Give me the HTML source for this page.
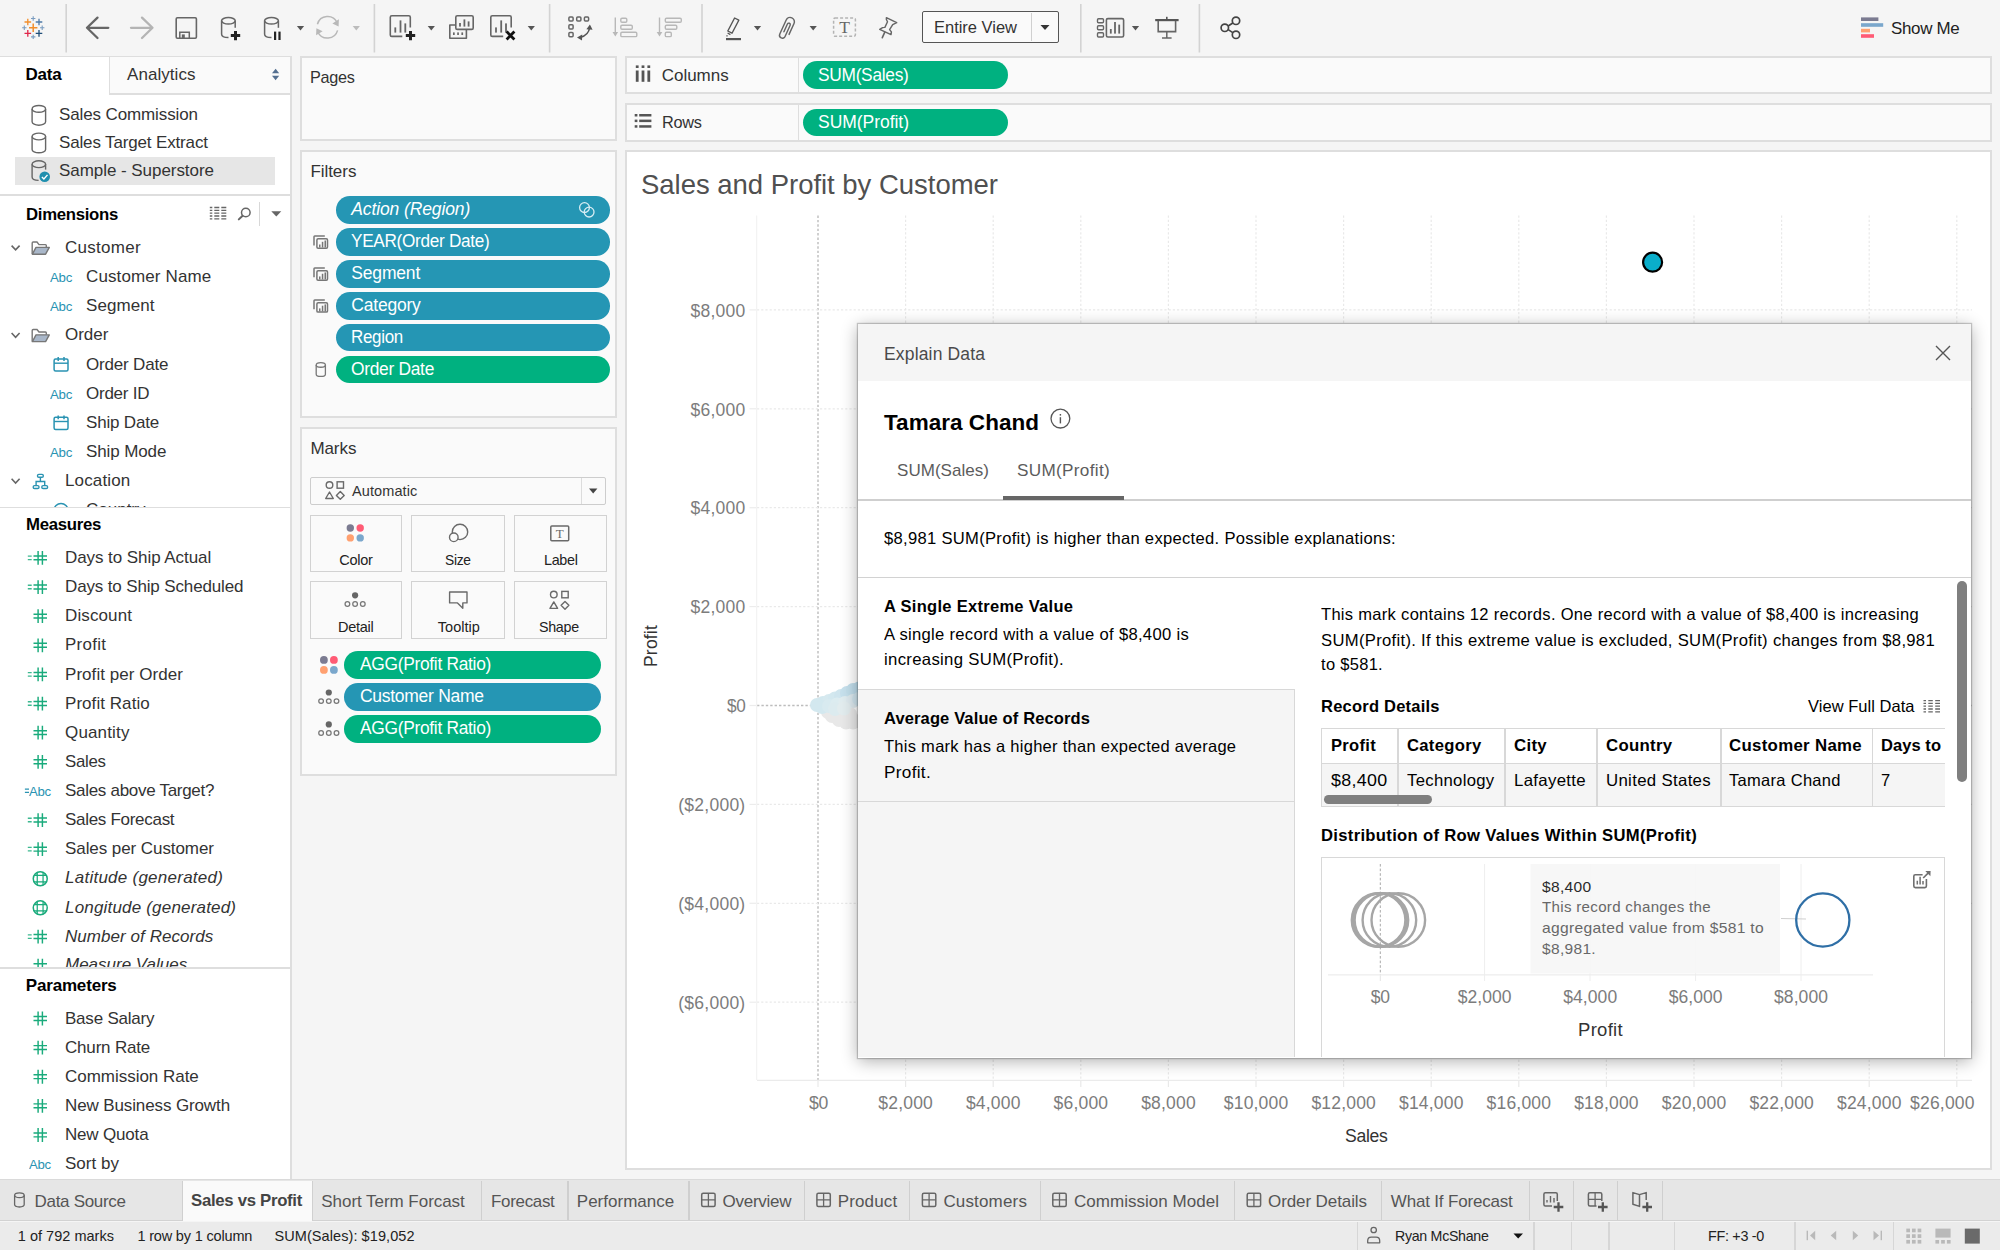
<!DOCTYPE html>
<html lang="en"><head><meta charset="utf-8"><title>Tableau - Sales vs Profit</title>
<style>
html,body{margin:0;padding:0;}
body{width:2000px;height:1250px;overflow:hidden;background:#f5f5f5;font-family:"Liberation Sans", sans-serif;position:relative;}
#app{position:absolute;left:0;top:0;width:2000px;height:1250px;overflow:hidden;}
#app div,#app span.t,#app svg{position:absolute;}
#app div{box-sizing:border-box;}
span.t{white-space:pre;}
svg{overflow:visible;}
</style></head><body><div id="app">
<div style="left:0px;top:0px;width:2000px;height:56px;background:#f5f5f5;"></div>
<div style="left:922px;top:11px;width:137px;height:32px;background:#fafafa;border:1.5px solid #555;border-radius:2px;"></div>
<div style="left:1031px;top:13px;width:1px;height:28px;background:#d0d0d0;"></div>
<span class="t" style="top:19px;font-size:16.5px;line-height:16.5px;color:#333;left:934px;letter-spacing:-0.016px;">Entire View</span>
<span class="t" style="top:20px;font-size:17px;line-height:17px;color:#222;left:1890.8px;letter-spacing:-0.3px;transform:scaleX(0.9960);transform-origin:0 50%;">Show Me</span>
<svg style="left:0px;top:0px;" width="2000" height="56" viewBox="0 0 2000 56"><rect x="65.4" y="4" width="1.6" height="48.5" fill="#d3d3d3"/><rect x="373.6" y="4" width="1.6" height="48.5" fill="#d3d3d3"/><rect x="548.8" y="4" width="1.6" height="48.5" fill="#d3d3d3"/><rect x="701.2" y="4" width="1.6" height="48.5" fill="#d3d3d3"/><rect x="1080.0" y="4" width="1.6" height="48.5" fill="#d3d3d3"/><rect x="1198.6" y="4" width="1.6" height="48.5" fill="#d3d3d3"/><path d="M29.000000000000004 27.8H37.400000000000006M33.2 23.6V32.0" stroke="#f28e2b" stroke-width="1.5" fill="none"/><path d="M24.5 22H31.1M27.8 18.7V25.3" stroke="#f28e2b" stroke-width="1.3" fill="none"/><path d="M35.7 22H42.3M39 18.7V25.3" stroke="#4e79a7" stroke-width="1.3" fill="none"/><path d="M24.5 33.4H31.1M27.8 30.099999999999998V36.699999999999996" stroke="#e0264a" stroke-width="1.3" fill="none"/><path d="M35.7 33.4H42.3M39 30.099999999999998V36.699999999999996" stroke="#1f4e79" stroke-width="1.3" fill="none"/><path d="M31.000000000000004 18.5H35.400000000000006M33.2 16.3V20.7" stroke="#7a9cc0" stroke-width="1.1" fill="none"/><path d="M31.000000000000004 36.9H35.400000000000006M33.2 34.699999999999996V39.1" stroke="#7a9cc0" stroke-width="1.1" fill="none"/><path d="M22.1 27.8H26.5M24.3 25.6V30.0" stroke="#7a9cc0" stroke-width="1.1" fill="none"/><path d="M40.0 27.8H44.400000000000006M42.2 25.6V30.0" stroke="#7a9cc0" stroke-width="1.1" fill="none"/><path d="M97.5 17.6L87 27.8L97.5 38M87 27.8H108.3" stroke="#666" stroke-width="2.3" fill="none" stroke-linecap="round" stroke-linejoin="round"/><path d="M142 17.6L152.5 27.8L142 38M152.5 27.8H131" stroke="#b4b4b4" stroke-width="2.3" fill="none" stroke-linecap="round" stroke-linejoin="round"/><rect x="176.2" y="17.8" width="20.2" height="20.4" rx="1.2" stroke="#666" stroke-width="1.6" fill="none"/><path d="M179.8 38V32.2H189.3V38" stroke="#666" stroke-width="1.5" fill="none"/><rect x="181.8" y="34.4" width="3" height="3.8" fill="#666"/><ellipse cx="228.39999999999998" cy="20.8" rx="6.799999999999997" ry="3.3" stroke="#666" stroke-width="1.5" fill="none"/><path d="M235.2 20.8V27.8" stroke="#666" stroke-width="1.5" fill="none"/><path d="M221.6 20.8V34.300000000000004Q221.6 37.6 228.5 37.6" stroke="#666" stroke-width="1.5" fill="none"/><path d="M230.8 35.6H240.2M235.5 30.9V40.3" stroke="#222" stroke-width="3" fill="none"/><ellipse cx="271.5" cy="20.8" rx="6.899999999999977" ry="3.3" stroke="#666" stroke-width="1.5" fill="none"/><path d="M278.4 20.8V27.8" stroke="#666" stroke-width="1.5" fill="none"/><path d="M264.6 20.8V34.300000000000004Q264.6 37.6 271.5 37.6" stroke="#666" stroke-width="1.5" fill="none"/><rect x="274" y="31.6" width="2.2" height="8.4" fill="#222"/><rect x="278.4" y="31.6" width="2.2" height="8.4" fill="#222"/><path d="M296.9 26.1H304.1L300.5 30.5Z" fill="#555"/><path d="M317.4 24.2A10.6 10.6 0 0 1 337.2 22.6" stroke="#b8b8b8" stroke-width="1.5" fill="none"/><path d="M337.6 30.4A10.6 10.6 0 0 1 317.8 32" stroke="#b8b8b8" stroke-width="1.5" fill="none"/><path d="M338.9 19.3L338.6 26.4L332.4 23.4Z" fill="#b8b8b8"/><path d="M316.1 35.3L316.4 28.2L322.6 31.2Z" fill="#b8b8b8"/><path d="M352.7 26.1H359.90000000000003L356.3 30.5Z" fill="#bcbcbc"/><path d="M410.3 27.400000000000006V17.3Q410.3 15.8 408.8 15.8H391.8Q390.3 15.8 390.3 17.3V34.900000000000006Q390.3 36.400000000000006 391.8 36.400000000000006H402.3" stroke="#666" stroke-width="1.6" fill="none"/><rect x="394.40000000000003" y="27.4" width="1.8" height="5.200000000000003" fill="#666"/><rect x="399.6" y="20.4" width="1.8" height="12.200000000000003" fill="#666"/><rect x="404.40000000000003" y="23.4" width="1.8" height="9.200000000000003" fill="#666"/><path d="M405.8 35.6H415.2M410.5 30.9V40.3" stroke="#222" stroke-width="3" fill="none"/><path d="M427.7 26.1H434.90000000000003L431.3 30.5Z" fill="#555"/><path d="M455.6 25H449.8V38.2H466.4V30" stroke="#666" stroke-width="1.6" fill="none" stroke-linejoin="round"/><rect x="455.8" y="15.8" width="17.4" height="13.6" rx="1.5" stroke="#666" stroke-width="1.6" fill="none"/><rect x="459.1" y="23" width="1.8" height="3.6000000000000014" fill="#666"/><rect x="463.5" y="19.4" width="1.8" height="7.200000000000003" fill="#666"/><rect x="467.70000000000005" y="21.4" width="1.8" height="5.200000000000003" fill="#666"/><rect x="453" y="32.4" width="1.7" height="2.6" fill="#666"/><rect x="457.2" y="32.4" width="1.7" height="2.6" fill="#666"/><rect x="461.4" y="32.4" width="1.7" height="2.6" fill="#666"/><path d="M511.2 27.400000000000006V17.3Q511.2 15.8 509.7 15.8H492.3Q490.8 15.8 490.8 17.3V34.900000000000006Q490.8 36.400000000000006 492.3 36.400000000000006H503.2" stroke="#666" stroke-width="1.6" fill="none"/><rect x="495.1" y="27.4" width="1.8" height="5.200000000000003" fill="#666"/><rect x="500.3" y="20.4" width="1.8" height="12.200000000000003" fill="#666"/><rect x="505.1" y="23.4" width="1.8" height="9.200000000000003" fill="#666"/><path d="M506.6 31.6L514.4 39.4M514.4 31.6L506.6 39.4" stroke="#111" stroke-width="2.8" fill="none"/><path d="M527.6999999999999 26.1H534.9L531.3 30.5Z" fill="#555"/><rect x="568.9" y="16.9" width="4.2" height="4.2" rx="1" stroke="#666" stroke-width="1.5" fill="none"/><rect x="576.6999999999999" y="16.9" width="4.2" height="4.2" rx="1" stroke="#666" stroke-width="1.5" fill="none"/><rect x="584.4" y="16.9" width="4.2" height="4.2" rx="1" stroke="#666" stroke-width="1.5" fill="none"/><rect x="568.9" y="24.7" width="4.2" height="4.2" rx="1" stroke="#666" stroke-width="1.5" fill="none"/><rect x="568.9" y="32.6" width="4.2" height="4.2" rx="1" stroke="#666" stroke-width="1.5" fill="none"/><path d="M580.5 37.2Q588.5 35.5 589.8 27" stroke="#555" stroke-width="1.6" fill="none"/><path d="M589.9 24.4L592.6 29.8L586.4 29.2Z" fill="#555"/><path d="M577 37.4L582.2 34.4L582 40.4Z" fill="#555"/><path d="M615.3 17.5V33" stroke="#b8b8b8" stroke-width="1.4" fill="none"/><path d="M612.5 32L618.0999999999999 32L615.3 36.5Z" fill="#b8b8b8"/><rect x="620.8" y="18.2" width="6" height="4" rx="1.2" stroke="#b8b8b8" stroke-width="1.4" fill="none"/><rect x="620.8" y="25.2" width="11.5" height="4" rx="1.2" stroke="#b8b8b8" stroke-width="1.4" fill="none"/><rect x="620.8" y="32.2" width="16" height="4.4" rx="1.2" stroke="#b8b8b8" stroke-width="1.4" fill="none"/><path d="M659.5 17.5V33" stroke="#b8b8b8" stroke-width="1.4" fill="none"/><path d="M656.7 32L662.3 32L659.5 36.5Z" fill="#b8b8b8"/><rect x="665.3" y="18.2" width="16" height="4" rx="1.2" stroke="#b8b8b8" stroke-width="1.4" fill="none"/><rect x="665.3" y="25.2" width="11.5" height="4" rx="1.2" stroke="#b8b8b8" stroke-width="1.4" fill="none"/><rect x="665.3" y="32.2" width="6" height="4.4" rx="1.2" stroke="#b8b8b8" stroke-width="1.4" fill="none"/><path d="M734.6 18L738.8 20.2L732 33.2L727.8 31Z" stroke="#555" stroke-width="1.4" fill="none" stroke-linejoin="round"/><path d="M727.6 33L730.4 34.6M726.6 35.4L727.4 36.4" stroke="#555" stroke-width="1.3" fill="none"/><rect x="726" y="38" width="15" height="2.2" fill="#555"/><path d="M753.9 26.1H761.1L757.5 30.5Z" fill="#555"/><g transform="translate(790.2 21.76) rotate(24.4)"><path d="M-1.6 11.7L-1.6 3.2A1.5 1.5 0 0 1 1.4 3.2L1.4 15.5A2.9 2.9 0 0 1 -4.4 15.5L-4.4 0A4.3 4.3 0 0 1 4.2 0L4.2 12" stroke="#666" stroke-width="1.45" fill="none" stroke-linecap="round"/></g><path d="M809.6 26.1H816.8000000000001L813.2 30.5Z" fill="#555"/><rect x="833.6" y="18" width="21.8" height="18.2" rx="1.5" stroke="#b4b4b4" stroke-width="1.5" fill="none" stroke-dasharray="3 2"/><text x="844.5" y="33" font-family="Liberation Serif, serif" font-size="17.5" fill="#666" text-anchor="middle">T</text><path d="M886.4 17.6L896.7 22.6L892.7 24.6L889.6 29.6L891.4 31.9L891 34.6L879.7 29.3L882.6 27.6L884.9 27.4L887.5 21.8L886.4 19.5Z" stroke="#666" stroke-width="1.45" fill="none" stroke-linejoin="round"/><path d="M884.8 32.2L882.3 37.7" stroke="#666" stroke-width="1.6" stroke-linecap="round"/><path d="M1040.5 25.0H1049.5L1045 30.0Z" fill="#333"/><rect x="1097.5" y="18.8" width="6" height="4" rx="1" stroke="#666" stroke-width="1.4" fill="none"/><rect x="1097.5" y="25.8" width="6" height="4" rx="1" stroke="#666" stroke-width="1.4" fill="none"/><rect x="1097.5" y="32.8" width="6" height="4.2" rx="1" stroke="#666" stroke-width="1.4" fill="none"/><rect x="1106.4" y="18.6" width="17.2" height="18.4" rx="1.5" stroke="#666" stroke-width="1.6" fill="none"/><rect x="1109.8999999999999" y="29" width="1.8" height="4.600000000000001" fill="#666"/><rect x="1114.1" y="22" width="1.8" height="11.600000000000001" fill="#666"/><rect x="1118.3" y="24.6" width="1.8" height="9.0" fill="#666"/><path d="M1131.9 26.1H1139.1L1135.5 30.5Z" fill="#555"/><rect x="1155.2" y="19" width="23.4" height="2.2" fill="#555"/><rect x="1166" y="16.8" width="1.6" height="3" fill="#555"/><path d="M1158.2 21V31.6H1175.6V21" stroke="#666" stroke-width="1.6" fill="none"/><path d="M1166.8 31.6V38M1162 38H1171.6" stroke="#666" stroke-width="1.5" fill="none"/><path d="M1228.2 26L1232.8 23M1228.2 29.6L1232.8 32.6" stroke="#444" stroke-width="1.7" fill="none"/><circle cx="1236" cy="20.8" r="3.7" stroke="#444" stroke-width="1.7" fill="none"/><circle cx="1224.8" cy="27.8" r="3.7" stroke="#444" stroke-width="1.7" fill="none"/><circle cx="1236" cy="34.8" r="3.7" stroke="#444" stroke-width="1.7" fill="none"/><rect x="1861" y="17.4" width="17.40000000000009" height="3.6" fill="#7b7b91"/><rect x="1861" y="23.2" width="22.200000000000045" height="3.6" fill="#7aa7cc"/><rect x="1861" y="28.8" width="9" height="3.6" fill="#ffa070"/><rect x="1861" y="34.2" width="13" height="3.6" fill="#ff5b75"/></svg>
<div style="left:0px;top:57px;width:290px;height:1123px;background:#fff;"></div>
<div style="left:290px;top:57px;width:2px;height:1123px;background:#dedede;"></div>
<div style="left:0px;top:55.6px;width:292px;height:1.5px;background:#dedede;"></div>
<div style="left:109px;top:57px;width:181px;height:38px;background:#fafafa;border-left:1px solid #dedede;border-bottom:2px solid #dedede;"></div>
<span class="t" style="top:66px;font-size:17px;line-height:17px;color:#000;font-weight:700;left:25.6px;letter-spacing:-0.286px;">Data</span>
<span class="t" style="top:66px;font-size:17px;line-height:17px;color:#333;left:127px;letter-spacing:0.059px;">Analytics</span>
<div style="left:15.4px;top:157px;width:259.6px;height:28px;background:#e6e6e6;"></div>
<span class="t" style="top:106px;font-size:17px;line-height:17px;color:#333;left:59px;letter-spacing:-0.118px;">Sales Commission</span>
<span class="t" style="top:134px;font-size:17px;line-height:17px;color:#333;left:59px;letter-spacing:-0.149px;">Sales Target Extract</span>
<span class="t" style="top:162px;font-size:17px;line-height:17px;color:#333;left:59px;letter-spacing:-0.050px;">Sample - Superstore</span>
<div style="left:0px;top:194.3px;width:290px;height:1.3px;background:#dedede;"></div>
<span class="t" style="top:206px;font-size:17px;line-height:17px;color:#000;font-weight:700;left:25.7px;letter-spacing:-0.3px;transform:scaleX(0.9854);transform-origin:0 50%;">Dimensions</span>
<div style="left:259.2px;top:201.5px;width:1.2px;height:24.5px;background:#d8d8d8;"></div>
<span class="t" style="top:239px;font-size:17px;line-height:17px;color:#333;left:65px;letter-spacing:0.288px;">Customer</span>
<span class="t" style="top:268px;font-size:17px;line-height:17px;color:#333;left:86px;letter-spacing:0.120px;">Customer Name</span>
<span class="t" style="top:297px;font-size:17px;line-height:17px;color:#333;left:86px;letter-spacing:0.076px;">Segment</span>
<span class="t" style="top:326px;font-size:17px;line-height:17px;color:#333;left:65px;letter-spacing:-0.042px;">Order</span>
<span class="t" style="top:356px;font-size:17px;line-height:17px;color:#333;left:86px;letter-spacing:-0.177px;">Order Date</span>
<span class="t" style="top:385px;font-size:17px;line-height:17px;color:#333;left:86px;letter-spacing:-0.241px;">Order ID</span>
<span class="t" style="top:414px;font-size:17px;line-height:17px;color:#333;left:86px;letter-spacing:-0.184px;">Ship Date</span>
<span class="t" style="top:443px;font-size:17px;line-height:17px;color:#333;left:86px;letter-spacing:-0.110px;">Ship Mode</span>
<span class="t" style="top:472px;font-size:17px;line-height:17px;color:#333;left:65px;letter-spacing:0.131px;">Location</span>
<div style="left:0;top:495px;width:290px;height:11.6px;overflow:hidden;"><span class="t" style="left:86px;top:5.75px;font-size:17px;line-height:17px;color:#333;position:absolute">Country</span></div>
<div style="left:0px;top:507px;width:290px;height:1.4px;background:#dedede;"></div>
<span class="t" style="top:516px;font-size:17px;line-height:17px;color:#000;font-weight:700;left:25.8px;letter-spacing:-0.3px;transform:scaleX(0.9864);transform-origin:0 50%;">Measures</span>
<span class="t" style="top:549px;font-size:17px;line-height:17px;color:#333;left:65px;letter-spacing:-0.068px;">Days to Ship Actual</span>
<span class="t" style="top:578px;font-size:17px;line-height:17px;color:#333;left:65px;letter-spacing:-0.141px;">Days to Ship Scheduled</span>
<span class="t" style="top:607px;font-size:17px;line-height:17px;color:#333;left:65px;letter-spacing:0.123px;">Discount</span>
<span class="t" style="top:636px;font-size:17px;line-height:17px;color:#333;left:65px;letter-spacing:0.3px;transform:scaleX(0.9931);transform-origin:0 50%;">Profit</span>
<span class="t" style="top:666px;font-size:17px;line-height:17px;color:#333;left:65px;letter-spacing:0.056px;">Profit per Order</span>
<span class="t" style="top:695px;font-size:17px;line-height:17px;color:#333;left:65px;letter-spacing:0.055px;">Profit Ratio</span>
<span class="t" style="top:724px;font-size:17px;line-height:17px;color:#333;left:65px;letter-spacing:0.155px;">Quantity</span>
<span class="t" style="top:753px;font-size:17px;line-height:17px;color:#333;left:65px;letter-spacing:-0.3px;transform:scaleX(0.9895);transform-origin:0 50%;">Sales</span>
<span class="t" style="top:782px;font-size:17px;line-height:17px;color:#333;left:65px;letter-spacing:-0.294px;">Sales above Target?</span>
<span class="t" style="top:811px;font-size:17px;line-height:17px;color:#333;left:65px;letter-spacing:-0.3px;transform:scaleX(1.0010);transform-origin:0 50%;">Sales Forecast</span>
<span class="t" style="top:840px;font-size:17px;line-height:17px;color:#333;left:65px;letter-spacing:-0.073px;">Sales per Customer</span>
<span class="t" style="top:869px;font-size:17px;line-height:17px;color:#333;font-style:italic;left:65px;letter-spacing:0.252px;">Latitude (generated)</span>
<span class="t" style="top:899px;font-size:17px;line-height:17px;color:#333;font-style:italic;left:65px;letter-spacing:0.185px;">Longitude (generated)</span>
<span class="t" style="top:928px;font-size:17px;line-height:17px;color:#333;font-style:italic;left:65px;letter-spacing:0.057px;">Number of Records</span>
<div style="left:0;top:950px;width:290px;height:17.3px;overflow:hidden;"><span class="t" style="left:65px;top:6.42px;font-size:17px;line-height:17px;color:#333;font-style:italic;position:absolute">Measure Values</span></div>
<div style="left:0px;top:967.4px;width:290px;height:1.4px;background:#dedede;"></div>
<span class="t" style="top:977px;font-size:17px;line-height:17px;color:#000;font-weight:700;left:25.8px;letter-spacing:-0.181px;">Parameters</span>
<span class="t" style="top:1010px;font-size:17px;line-height:17px;color:#333;left:65px;letter-spacing:-0.217px;">Base Salary</span>
<span class="t" style="top:1039px;font-size:17px;line-height:17px;color:#333;left:65px;letter-spacing:-0.182px;">Churn Rate</span>
<span class="t" style="top:1068px;font-size:17px;line-height:17px;color:#333;left:65px;letter-spacing:-0.025px;">Commission Rate</span>
<span class="t" style="top:1097px;font-size:17px;line-height:17px;color:#333;left:65px;letter-spacing:-0.119px;">New Business Growth</span>
<span class="t" style="top:1126px;font-size:17px;line-height:17px;color:#333;left:65px;letter-spacing:-0.181px;">New Quota</span>
<span class="t" style="top:1155px;font-size:17px;line-height:17px;color:#333;left:65px;letter-spacing:0.023px;">Sort by</span>
<span class="t" style="top:271px;font-size:13.5px;line-height:13.5px;color:#2a93b2;left:50px;letter-spacing:-0.3px;transform:scaleX(0.9837);transform-origin:0 50%;">Abc</span>
<span class="t" style="top:300px;font-size:13.5px;line-height:13.5px;color:#2a93b2;left:50px;letter-spacing:-0.3px;transform:scaleX(0.9837);transform-origin:0 50%;">Abc</span>
<span class="t" style="top:388px;font-size:13.5px;line-height:13.5px;color:#2a93b2;left:50px;letter-spacing:-0.3px;transform:scaleX(0.9837);transform-origin:0 50%;">Abc</span>
<span class="t" style="top:446px;font-size:13.5px;line-height:13.5px;color:#2a93b2;left:50px;letter-spacing:-0.3px;transform:scaleX(0.9837);transform-origin:0 50%;">Abc</span>
<span class="t" style="top:785px;font-size:13.2px;line-height:13.2px;color:#2a93b2;left:29.2px;letter-spacing:-0.3px;transform:scaleX(0.9984);transform-origin:0 50%;">Abc</span>
<span class="t" style="top:1158px;font-size:13.2px;line-height:13.2px;color:#2a93b2;left:29.2px;letter-spacing:-0.3px;transform:scaleX(0.9984);transform-origin:0 50%;">Abc</span>
<svg style="left:0px;top:0px;" width="300" height="1180" viewBox="0 0 300 1180"><ellipse cx="38.85" cy="108.9" rx="6.75" ry="3.4" stroke="#666" stroke-width="1.4" fill="none"/><path d="M32.1 108.9V121.8A6.75 3.4 0 0 0 45.6 121.8V108.9" stroke="#666" stroke-width="1.4" fill="none"/><ellipse cx="38.85" cy="136.5" rx="6.75" ry="3.4" stroke="#666" stroke-width="1.4" fill="none"/><path d="M32.1 136.5V149.4A6.75 3.4 0 0 0 45.6 149.4V136.5" stroke="#666" stroke-width="1.4" fill="none"/><ellipse cx="38.85" cy="164.2" rx="6.75" ry="3.4" stroke="#666" stroke-width="1.4" fill="none"/><path d="M45.6 164.2V169.6" stroke="#666" stroke-width="1.4" fill="none"/><path d="M32.1 164.2V177.0Q32.1 180.4 38.6 180.4" stroke="#666" stroke-width="1.4" fill="none"/><circle cx="44.7" cy="176.8" r="5.3" fill="#1f8fae"/><path d="M41.9 176.9L43.9 178.9L47.5 174.9" stroke="#fff" stroke-width="1.4" fill="none"/><path d="M272 73.2L275.6 68.7L279.2 73.2Z" fill="#546f90"/><path d="M272 75.8L275.6 80.3L279.2 75.8Z" fill="#546f90"/><path d="M209.8 207.5H212.3M214.3 207.5H219.3M221.3 207.5H226.3" stroke="#666" stroke-width="1.3"/><path d="M209.8 210.35H212.3M214.3 210.35H219.3M221.3 210.35H226.3" stroke="#666" stroke-width="1.3"/><path d="M209.8 213.15H212.3M214.3 213.15H219.3M221.3 213.15H226.3" stroke="#666" stroke-width="1.3"/><path d="M209.8 216H212.3M214.3 216H219.3M221.3 216H226.3" stroke="#666" stroke-width="1.3"/><path d="M209.8 218.8H212.3M214.3 218.8H219.3M221.3 218.8H226.3" stroke="#666" stroke-width="1.3"/><circle cx="245.8" cy="212.5" r="4.3" stroke="#666" stroke-width="1.5" fill="none"/><path d="M242.6 215.7L238.8 219.4" stroke="#666" stroke-width="2" stroke-linecap="round"/><path d="M271.3 211.2H281.3L276.3 216.6Z" fill="#666"/><path d="M11.6 245.6L15.6 249.8L19.6 245.6" stroke="#666" stroke-width="1.6" fill="none"/><path d="M32.2 254.0V243.0Q32.2 242.0 33.2 242.0H37L39 244.6H45.5Q46.3 244.6 46.3 245.6V247.2" stroke="#777" stroke-width="1.4" fill="none"/><path d="M36 247.4H49.3L45.6 254.2H32.4Z" fill="#a9b7c9" stroke="#777" stroke-width="1.4" stroke-linejoin="round"/><path d="M11.6 333.05L15.6 337.25L19.6 333.05" stroke="#666" stroke-width="1.6" fill="none"/><path d="M32.2 341.45V330.45Q32.2 329.45 33.2 329.45H37L39 332.04999999999995H45.5Q46.3 332.04999999999995 46.3 333.04999999999995V334.65" stroke="#777" stroke-width="1.4" fill="none"/><path d="M36 334.85H49.3L45.6 341.65H32.4Z" fill="#a9b7c9" stroke="#777" stroke-width="1.4" stroke-linejoin="round"/><rect x="54.1" y="358.90000000000003" width="13.9" height="12.2" rx="1.5" stroke="#2a93b2" stroke-width="1.5" fill="none"/><path d="M54.1 363.20000000000005H68.0" stroke="#2a93b2" stroke-width="1.4"/><path d="M58.2 357.1V360.90000000000003M64.0 357.1V360.90000000000003" stroke="#2a93b2" stroke-width="1.5"/><rect x="54.1" y="417.2" width="13.9" height="12.2" rx="1.5" stroke="#2a93b2" stroke-width="1.5" fill="none"/><path d="M54.1 421.5H68.0" stroke="#2a93b2" stroke-width="1.4"/><path d="M58.2 415.4V419.2M64.0 415.4V419.2" stroke="#2a93b2" stroke-width="1.5"/><path d="M11.6 478.8L15.6 483.0L19.6 478.8" stroke="#666" stroke-width="1.6" fill="none"/><rect x="37.5" y="474.4" width="5.8" height="2.9" rx="1.3" stroke="#2a93b2" stroke-width="1.4" fill="none"/><rect x="33.2" y="485.59999999999997" width="5.8" height="2.9" rx="1.3" stroke="#2a93b2" stroke-width="1.4" fill="none"/><rect x="41.8" y="485.59999999999997" width="5.8" height="2.9" rx="1.3" stroke="#2a93b2" stroke-width="1.4" fill="none"/><path d="M40.4 478.0V481.5M36.1 485.2V481.5H44.7V485.2" stroke="#2a93b2" stroke-width="1.4" fill="none"/><path d="M38.1 551.0V564.8M42.4 551.0V564.8M33.5 555.9H47M33.5 559.8H47" stroke="#1aab7c" stroke-width="1.45" fill="none"/><path d="M27.8 556.1H31.7M27.8 559.6H31.7" stroke="#1aab7c" stroke-width="1.3" fill="none" stroke-opacity="0.85"/><path d="M38.1 580.13V593.93M42.4 580.13V593.93M33.5 585.03H47M33.5 588.93H47" stroke="#1aab7c" stroke-width="1.45" fill="none"/><path d="M27.8 585.23H31.7M27.8 588.73H31.7" stroke="#1aab7c" stroke-width="1.3" fill="none" stroke-opacity="0.85"/><path d="M38.1 609.26V623.06M42.4 609.26V623.06M33.5 614.16H47M33.5 618.06H47" stroke="#1aab7c" stroke-width="1.45" fill="none"/><path d="M38.1 638.39V652.1899999999999M42.4 638.39V652.1899999999999M33.5 643.29H47M33.5 647.1899999999999H47" stroke="#1aab7c" stroke-width="1.45" fill="none"/><path d="M38.1 667.52V681.3199999999999M42.4 667.52V681.3199999999999M33.5 672.42H47M33.5 676.3199999999999H47" stroke="#1aab7c" stroke-width="1.45" fill="none"/><path d="M27.8 672.62H31.7M27.8 676.12H31.7" stroke="#1aab7c" stroke-width="1.3" fill="none" stroke-opacity="0.85"/><path d="M38.1 696.65V710.4499999999999M42.4 696.65V710.4499999999999M33.5 701.55H47M33.5 705.4499999999999H47" stroke="#1aab7c" stroke-width="1.45" fill="none"/><path d="M27.8 701.75H31.7M27.8 705.25H31.7" stroke="#1aab7c" stroke-width="1.3" fill="none" stroke-opacity="0.85"/><path d="M38.1 725.78V739.5799999999999M42.4 725.78V739.5799999999999M33.5 730.68H47M33.5 734.5799999999999H47" stroke="#1aab7c" stroke-width="1.45" fill="none"/><path d="M38.1 754.91V768.7099999999999M42.4 754.91V768.7099999999999M33.5 759.81H47M33.5 763.7099999999999H47" stroke="#1aab7c" stroke-width="1.45" fill="none"/><path d="M24.9 789.14H29M24.9 792.4399999999999H29" stroke="#2a93b2" stroke-width="1.3" fill="none"/><path d="M38.1 813.1700000000001V826.97M42.4 813.1700000000001V826.97M33.5 818.07H47M33.5 821.97H47" stroke="#1aab7c" stroke-width="1.45" fill="none"/><path d="M27.8 818.2700000000001H31.7M27.8 821.7700000000001H31.7" stroke="#1aab7c" stroke-width="1.3" fill="none" stroke-opacity="0.85"/><path d="M38.1 842.3V856.0999999999999M42.4 842.3V856.0999999999999M33.5 847.1999999999999H47M33.5 851.0999999999999H47" stroke="#1aab7c" stroke-width="1.45" fill="none"/><path d="M27.8 847.4H31.7M27.8 850.9H31.7" stroke="#1aab7c" stroke-width="1.3" fill="none" stroke-opacity="0.85"/><circle cx="40.25" cy="878.73" r="7" stroke="#1aab7c" stroke-width="1.5" fill="none"/><path d="M37.25 872.4300000000001V885.03M43.05 872.4300000000001V885.03M33.95 875.4300000000001H46.55M33.95 881.83H46.55" stroke="#1aab7c" stroke-width="1.2" fill="none"/><path d="M37.25 875.4300000000001L35.25 873.73M43.05 875.4300000000001L45.25 873.73M37.25 881.83L35.25 883.73M43.05 881.83L45.25 883.73" stroke="#1aab7c" stroke-width="1" fill="none" stroke-opacity="0.7"/><circle cx="40.25" cy="907.8599999999999" r="7" stroke="#1aab7c" stroke-width="1.5" fill="none"/><path d="M37.25 901.56V914.1599999999999M43.05 901.56V914.1599999999999M33.95 904.56H46.55M33.95 910.9599999999999H46.55" stroke="#1aab7c" stroke-width="1.2" fill="none"/><path d="M37.25 904.56L35.25 902.8599999999999M43.05 904.56L45.25 902.8599999999999M37.25 910.9599999999999L35.25 912.8599999999999M43.05 910.9599999999999L45.25 912.8599999999999" stroke="#1aab7c" stroke-width="1" fill="none" stroke-opacity="0.7"/><path d="M38.1 929.69V943.49M42.4 929.69V943.49M33.5 934.59H47M33.5 938.49H47" stroke="#1aab7c" stroke-width="1.45" fill="none"/><path d="M27.8 934.7900000000001H31.7M27.8 938.2900000000001H31.7" stroke="#1aab7c" stroke-width="1.3" fill="none" stroke-opacity="0.85"/><path d="M38.1 1011.6V1025.4M42.4 1011.6V1025.4M33.5 1016.5H47M33.5 1020.4H47" stroke="#1aab7c" stroke-width="1.45" fill="none"/><path d="M38.1 1040.72V1054.52M42.4 1040.72V1054.52M33.5 1045.6200000000001H47M33.5 1049.52H47" stroke="#1aab7c" stroke-width="1.45" fill="none"/><path d="M38.1 1069.84V1083.6399999999999M42.4 1069.84V1083.6399999999999M33.5 1074.74H47M33.5 1078.6399999999999H47" stroke="#1aab7c" stroke-width="1.45" fill="none"/><path d="M38.1 1098.96V1112.76M42.4 1098.96V1112.76M33.5 1103.8600000000001H47M33.5 1107.76H47" stroke="#1aab7c" stroke-width="1.45" fill="none"/><path d="M38.1 1128.08V1141.8799999999999M42.4 1128.08V1141.8799999999999M33.5 1132.98H47M33.5 1136.8799999999999H47" stroke="#1aab7c" stroke-width="1.45" fill="none"/></svg>
<div style="left:0;top:495px;width:290px;height:11.6px;overflow:hidden;"><svg style="left:0;top:-495px" width="300" height="600" viewBox="0 0 300 600"><circle cx="61" cy="510.45" r="7" stroke="#2a93b2" stroke-width="1.5" fill="none"/></svg></div>
<div style="left:0;top:950px;width:290px;height:17.3px;overflow:hidden;"><svg style="left:0;top:-950px" width="300" height="1000" viewBox="0 0 300 1000"><path d="M38.1 958.8199999999999V972.6199999999999M42.4 958.8199999999999V972.6199999999999M33.5 963.7199999999999H47M33.5 967.6199999999999H47" stroke="#1aab7c" stroke-width="1.45" fill="none"/></svg></div>
<div style="left:300px;top:55.6px;width:317px;height:85.9px;background:#fafafa;border:2px solid #dedede;"></div>
<span class="t" style="top:69px;font-size:17px;line-height:17px;color:#333;left:310.4px;letter-spacing:-0.3px;transform:scaleX(0.9550);transform-origin:0 50%;">Pages</span>
<div style="left:300px;top:150px;width:317px;height:268px;background:#fafafa;border:2px solid #dedede;"></div>
<span class="t" style="top:163px;font-size:17px;line-height:17px;color:#333;left:310.4px;letter-spacing:-0.047px;">Filters</span>
<div style="left:336px;top:196.0px;width:274px;height:27.7px;background:#2596b4;border-radius:13.85px;"></div>
<span class="t" style="top:201px;font-size:17.5px;line-height:17.5px;color:#fff;font-style:italic;left:351.3px;letter-spacing:-0.116px;">Action (Region)</span>
<div style="left:336px;top:227.95px;width:274px;height:27.7px;background:#2596b4;border-radius:13.85px;"></div>
<span class="t" style="top:233px;font-size:17.5px;line-height:17.5px;color:#fff;left:351.3px;letter-spacing:-0.3px;transform:scaleX(0.9817);transform-origin:0 50%;">YEAR(Order Date)</span>
<div style="left:336px;top:259.9px;width:274px;height:27.7px;background:#2596b4;border-radius:13.85px;"></div>
<span class="t" style="top:265px;font-size:17.5px;line-height:17.5px;color:#fff;left:351.3px;letter-spacing:-0.174px;">Segment</span>
<div style="left:336px;top:291.85px;width:274px;height:27.7px;background:#2596b4;border-radius:13.85px;"></div>
<span class="t" style="top:297px;font-size:17.5px;line-height:17.5px;color:#fff;left:351.3px;letter-spacing:-0.217px;">Category</span>
<div style="left:336px;top:323.8px;width:274px;height:27.7px;background:#2596b4;border-radius:13.85px;"></div>
<span class="t" style="top:329px;font-size:17.5px;line-height:17.5px;color:#fff;left:351.3px;letter-spacing:-0.3px;transform:scaleX(0.9689);transform-origin:0 50%;">Region</span>
<div style="left:336px;top:355.75px;width:274px;height:27.7px;background:#00b180;border-radius:13.85px;"></div>
<span class="t" style="top:361px;font-size:17.5px;line-height:17.5px;color:#fff;left:351.3px;letter-spacing:-0.3px;transform:scaleX(0.9933);transform-origin:0 50%;">Order Date</span>
<div style="left:300px;top:427px;width:317px;height:349px;background:#fafafa;border:2px solid #dedede;"></div>
<span class="t" style="top:440px;font-size:17px;line-height:17px;color:#333;left:310.4px;letter-spacing:-0.070px;">Marks</span>
<div style="left:310.3px;top:477px;width:296px;height:28px;background:#fafafa;border:1.2px solid #cdcdcd;border-radius:2px;"></div>
<div style="left:581px;top:478px;width:1px;height:26px;background:#dcdcdc;"></div>
<span class="t" style="top:484px;font-size:14.5px;line-height:14.5px;color:#333;left:352.1px;letter-spacing:0.089px;">Automatic</span>
<div style="left:310.3px;top:514.5px;width:92px;height:57.2px;background:#fafafa;border:1.2px solid #d2d2d2;"></div>
<span class="t" style="top:553px;font-size:14.5px;line-height:14.5px;color:#222;left:339.3px;letter-spacing:-0.289px;">Color</span>
<div style="left:411.4px;top:514.5px;width:93.6px;height:57.2px;background:#fafafa;border:1.2px solid #d2d2d2;"></div>
<span class="t" style="top:553px;font-size:14.5px;line-height:14.5px;color:#222;left:444.8px;letter-spacing:-0.3px;transform:scaleX(0.9512);transform-origin:0 50%;">Size</span>
<div style="left:514.2px;top:514.5px;width:92.4px;height:57.2px;background:#fafafa;border:1.2px solid #d2d2d2;"></div>
<span class="t" style="top:553px;font-size:14.5px;line-height:14.5px;color:#222;left:543.7px;letter-spacing:-0.3px;transform:scaleX(0.9887);transform-origin:0 50%;">Label</span>
<div style="left:310.3px;top:581.4px;width:92px;height:57.2px;background:#fafafa;border:1.2px solid #d2d2d2;"></div>
<span class="t" style="top:620px;font-size:14.5px;line-height:14.5px;color:#222;left:338px;letter-spacing:-0.256px;">Detail</span>
<div style="left:411.4px;top:581.4px;width:93.6px;height:57.2px;background:#fafafa;border:1.2px solid #d2d2d2;"></div>
<span class="t" style="top:620px;font-size:14.5px;line-height:14.5px;color:#222;left:437.8px;letter-spacing:0.013px;">Tooltip</span>
<div style="left:514.2px;top:581.4px;width:92.4px;height:57.2px;background:#fafafa;border:1.2px solid #d2d2d2;"></div>
<span class="t" style="top:620px;font-size:14.5px;line-height:14.5px;color:#222;left:539.2px;letter-spacing:-0.3px;transform:scaleX(0.9842);transform-origin:0 50%;">Shape</span>
<div style="left:344.2px;top:651px;width:257.2px;height:27.8px;background:#00b180;border-radius:13.9px;"></div>
<span class="t" style="top:656px;font-size:17.5px;line-height:17.5px;color:#fff;left:360px;letter-spacing:-0.3px;transform:scaleX(0.9922);transform-origin:0 50%;">AGG(Profit Ratio)</span>
<div style="left:344.2px;top:683px;width:257.2px;height:27.8px;background:#2596b4;border-radius:13.9px;"></div>
<span class="t" style="top:688px;font-size:17.5px;line-height:17.5px;color:#fff;left:360px;letter-spacing:-0.284px;">Customer Name</span>
<div style="left:344.2px;top:715px;width:257.2px;height:27.8px;background:#00b180;border-radius:13.9px;"></div>
<span class="t" style="top:720px;font-size:17.5px;line-height:17.5px;color:#fff;left:360px;letter-spacing:-0.3px;transform:scaleX(0.9922);transform-origin:0 50%;">AGG(Profit Ratio)</span>
<div style="left:625.2px;top:55.6px;width:1366.7px;height:38.6px;background:#fafafa;border:2px solid #dedede;"></div>
<div style="left:625.2px;top:103px;width:1366.7px;height:38.7px;background:#fafafa;border:2px solid #dedede;"></div>
<div style="left:797.6px;top:58px;width:1.5px;height:34.2px;background:#dedede;"></div>
<div style="left:797.6px;top:105px;width:1.5px;height:34.7px;background:#dedede;"></div>
<span class="t" style="top:67px;font-size:17px;line-height:17px;color:#333;left:661.7px;letter-spacing:-0.016px;">Columns</span>
<span class="t" style="top:114px;font-size:17px;line-height:17px;color:#333;left:661.7px;letter-spacing:-0.3px;transform:scaleX(0.9585);transform-origin:0 50%;">Rows</span>
<div style="left:802.6px;top:61.3px;width:205.8px;height:27.4px;background:#00b180;border-radius:14px;"></div>
<span class="t" style="top:67px;font-size:17.5px;line-height:17.5px;color:#fff;left:818px;letter-spacing:-0.3px;transform:scaleX(0.9909);transform-origin:0 50%;">SUM(Sales)</span>
<div style="left:802.6px;top:108.5px;width:205.8px;height:27.4px;background:#00b180;border-radius:14px;"></div>
<span class="t" style="top:114px;font-size:17.5px;line-height:17.5px;color:#fff;left:818px;letter-spacing:-0.039px;">SUM(Profit)</span>
<svg style="left:0px;top:0px;" width="2000" height="800" viewBox="0 0 2000 800"><path d="M314 245.39999999999998V236.79999999999998Q314 236.0 314.8 236.0H324.8" stroke="#777" stroke-width="1.5" fill="none"/><rect x="316.9" y="238.79999999999998" width="10.6" height="9.4" rx="1.2" stroke="#777" stroke-width="1.5" fill="#fafafa"/><rect x="319" y="244.5" width="1.5" height="3" fill="#777"/><rect x="321.8" y="241.79999999999998" width="1.5" height="5.7" fill="#777"/><rect x="324.5" y="240.5" width="1.5" height="7" fill="#777"/><path d="M314 277.34999999999997V268.75Q314 267.95 314.8 267.95H324.8" stroke="#777" stroke-width="1.5" fill="none"/><rect x="316.9" y="270.75" width="10.6" height="9.4" rx="1.2" stroke="#777" stroke-width="1.5" fill="#fafafa"/><rect x="319" y="276.45" width="1.5" height="3" fill="#777"/><rect x="321.8" y="273.75" width="1.5" height="5.7" fill="#777"/><rect x="324.5" y="272.45" width="1.5" height="7" fill="#777"/><path d="M314 309.3V300.70000000000005Q314 299.90000000000003 314.8 299.90000000000003H324.8" stroke="#777" stroke-width="1.5" fill="none"/><rect x="316.9" y="302.70000000000005" width="10.6" height="9.4" rx="1.2" stroke="#777" stroke-width="1.5" fill="#fafafa"/><rect x="319" y="308.40000000000003" width="1.5" height="3" fill="#777"/><rect x="321.8" y="305.70000000000005" width="1.5" height="5.7" fill="#777"/><rect x="324.5" y="304.40000000000003" width="1.5" height="7" fill="#777"/><ellipse cx="320.8" cy="364.95" rx="4.6" ry="2.3" stroke="#777" stroke-width="1.3" fill="none"/><path d="M316.2 364.95V374.15A4.6 2.3 0 0 0 325.4 374.15V364.95" stroke="#777" stroke-width="1.3" fill="none"/><circle cx="584.5" cy="207.6" r="4.9" stroke="#d8edf3" stroke-width="1.3" fill="none"/><circle cx="589.1" cy="212.1" r="4.9" stroke="#d8edf3" stroke-width="1.3" fill="none"/><circle cx="329.5" cy="485" r="3.3" stroke="#6a6a6a" stroke-width="1.4" fill="none"/><rect x="337.1" y="481.8" width="6.4" height="6.4" stroke="#6a6a6a" stroke-width="1.4" fill="none"/><path d="M329.5 492.0L333.3 498.5H325.7Z" stroke="#6a6a6a" stroke-width="1.4" fill="none" stroke-linejoin="round"/><path d="M340.3 491.5L344.2 495.4L340.3 499.29999999999995L336.40000000000003 495.4Z" stroke="#6a6a6a" stroke-width="1.4" fill="none" stroke-linejoin="round"/><path d="M589 488.6H597.4L593.2 493.4Z" fill="#444"/><circle cx="350.3" cy="528.0" r="3.7" fill="#7b7b91"/><circle cx="360.2" cy="528.0" r="3.7" fill="#ff5b75"/><circle cx="350.3" cy="537.9000000000001" r="3.7" fill="#ffa070"/><circle cx="360.2" cy="537.9000000000001" r="3.7" fill="#7aa7cc"/><circle cx="460" cy="531.9" r="7.7" stroke="#6a6a6a" stroke-width="1.4" fill="none"/><circle cx="453.8" cy="537.3" r="4.3" stroke="#6a6a6a" stroke-width="1.4" fill="#fafafa"/><rect x="550.8" y="525.9" width="17.9" height="14.8" rx="1" stroke="#6a6a6a" stroke-width="1.5" fill="none"/><text x="559.8" y="537.6" font-family="Liberation Serif, serif" font-size="13" fill="#6a6a6a" text-anchor="middle">T</text><circle cx="355.1" cy="595.3" r="3.1" fill="#666"/><circle cx="347.40000000000003" cy="603.9" r="2.35" stroke="#777" stroke-width="1.25" fill="none"/><circle cx="355.1" cy="603.9" r="2.35" stroke="#777" stroke-width="1.25" fill="none"/><circle cx="362.8" cy="603.9" r="2.35" stroke="#777" stroke-width="1.25" fill="none"/><path d="M449.6 592H467V602.9H462.8V608.2L457.5 602.9H449.6Z" stroke="#6a6a6a" stroke-width="1.4" fill="none" stroke-linejoin="round"/><circle cx="553.8" cy="594.6" r="3.3" stroke="#6a6a6a" stroke-width="1.4" fill="none"/><rect x="561.8" y="591.4" width="6.4" height="6.4" stroke="#6a6a6a" stroke-width="1.4" fill="none"/><path d="M553.8 601.9L557.5999999999999 608.4H550.0Z" stroke="#6a6a6a" stroke-width="1.4" fill="none" stroke-linejoin="round"/><path d="M565 601.4L568.9 605.3L565 609.1999999999999L561.1 605.3Z" stroke="#6a6a6a" stroke-width="1.4" fill="none" stroke-linejoin="round"/><circle cx="323.9" cy="659.95" r="3.9" fill="#7b7b91"/><circle cx="333.9" cy="659.95" r="3.9" fill="#ff5b75"/><circle cx="323.9" cy="669.95" r="3.9" fill="#ffa070"/><circle cx="333.9" cy="669.95" r="3.9" fill="#7aa7cc"/><circle cx="328.8" cy="692.5" r="3.1" fill="#666"/><circle cx="321.1" cy="701.1" r="2.35" stroke="#777" stroke-width="1.25" fill="none"/><circle cx="328.8" cy="701.1" r="2.35" stroke="#777" stroke-width="1.25" fill="none"/><circle cx="336.5" cy="701.1" r="2.35" stroke="#777" stroke-width="1.25" fill="none"/><circle cx="328.8" cy="724.4" r="3.1" fill="#666"/><circle cx="321.1" cy="733.0" r="2.35" stroke="#777" stroke-width="1.25" fill="none"/><circle cx="328.8" cy="733.0" r="2.35" stroke="#777" stroke-width="1.25" fill="none"/><circle cx="336.5" cy="733.0" r="2.35" stroke="#777" stroke-width="1.25" fill="none"/><rect x="635.8" y="65.4" width="2.8" height="2.6" fill="#555"/><rect x="635.8" y="70.5" width="2.8" height="11.3" fill="#555"/><rect x="641.6" y="65.4" width="2.8" height="2.6" fill="#555"/><rect x="641.6" y="70.5" width="2.8" height="11.3" fill="#555"/><rect x="647.4" y="65.4" width="2.8" height="2.6" fill="#555"/><rect x="647.4" y="70.5" width="2.8" height="11.3" fill="#555"/><rect x="634.7" y="114" width="2.7" height="2.5" fill="#555"/><rect x="639.2" y="114" width="12.2" height="2.5" fill="#555"/><rect x="634.7" y="119.6" width="2.7" height="2.5" fill="#555"/><rect x="639.2" y="119.6" width="12.2" height="2.5" fill="#555"/><rect x="634.7" y="125.2" width="2.7" height="2.5" fill="#555"/><rect x="639.2" y="125.2" width="12.2" height="2.5" fill="#555"/></svg>
<div style="left:625.2px;top:150px;width:1366.7px;height:1020px;background:#fff;border:2px solid #dedede;"></div>
<span class="t" style="top:171px;font-size:27.5px;line-height:27.5px;color:#505050;left:641px;letter-spacing:-0.025px;">Sales and Profit by Customer</span>
<svg style="left:0px;top:0px;" width="2000" height="1250" viewBox="0 0 2000 1250"><line x1="818.0" y1="215.5" x2="818.0" y2="1080" stroke="#bdbdbd" stroke-width="1.4" stroke-dasharray="2.4 2"/><line x1="818.0" y1="1080" x2="818.0" y2="1087" stroke="#e9e9e9" stroke-width="1.2"/><line x1="905.6" y1="215.5" x2="905.6" y2="1080" stroke="#e9e9e9" stroke-width="1.2" stroke-dasharray="2.2 2"/><line x1="905.6" y1="1080" x2="905.6" y2="1087" stroke="#e9e9e9" stroke-width="1.2"/><line x1="993.2" y1="215.5" x2="993.2" y2="1080" stroke="#e9e9e9" stroke-width="1.2" stroke-dasharray="2.2 2"/><line x1="993.2" y1="1080" x2="993.2" y2="1087" stroke="#e9e9e9" stroke-width="1.2"/><line x1="1080.8" y1="215.5" x2="1080.8" y2="1080" stroke="#e9e9e9" stroke-width="1.2" stroke-dasharray="2.2 2"/><line x1="1080.8" y1="1080" x2="1080.8" y2="1087" stroke="#e9e9e9" stroke-width="1.2"/><line x1="1168.4" y1="215.5" x2="1168.4" y2="1080" stroke="#e9e9e9" stroke-width="1.2" stroke-dasharray="2.2 2"/><line x1="1168.4" y1="1080" x2="1168.4" y2="1087" stroke="#e9e9e9" stroke-width="1.2"/><line x1="1256.0" y1="215.5" x2="1256.0" y2="1080" stroke="#e9e9e9" stroke-width="1.2" stroke-dasharray="2.2 2"/><line x1="1256.0" y1="1080" x2="1256.0" y2="1087" stroke="#e9e9e9" stroke-width="1.2"/><line x1="1343.6" y1="215.5" x2="1343.6" y2="1080" stroke="#e9e9e9" stroke-width="1.2" stroke-dasharray="2.2 2"/><line x1="1343.6" y1="1080" x2="1343.6" y2="1087" stroke="#e9e9e9" stroke-width="1.2"/><line x1="1431.2" y1="215.5" x2="1431.2" y2="1080" stroke="#e9e9e9" stroke-width="1.2" stroke-dasharray="2.2 2"/><line x1="1431.2" y1="1080" x2="1431.2" y2="1087" stroke="#e9e9e9" stroke-width="1.2"/><line x1="1518.8" y1="215.5" x2="1518.8" y2="1080" stroke="#e9e9e9" stroke-width="1.2" stroke-dasharray="2.2 2"/><line x1="1518.8" y1="1080" x2="1518.8" y2="1087" stroke="#e9e9e9" stroke-width="1.2"/><line x1="1606.4" y1="215.5" x2="1606.4" y2="1080" stroke="#e9e9e9" stroke-width="1.2" stroke-dasharray="2.2 2"/><line x1="1606.4" y1="1080" x2="1606.4" y2="1087" stroke="#e9e9e9" stroke-width="1.2"/><line x1="1694.0" y1="215.5" x2="1694.0" y2="1080" stroke="#e9e9e9" stroke-width="1.2" stroke-dasharray="2.2 2"/><line x1="1694.0" y1="1080" x2="1694.0" y2="1087" stroke="#e9e9e9" stroke-width="1.2"/><line x1="1781.6" y1="215.5" x2="1781.6" y2="1080" stroke="#e9e9e9" stroke-width="1.2" stroke-dasharray="2.2 2"/><line x1="1781.6" y1="1080" x2="1781.6" y2="1087" stroke="#e9e9e9" stroke-width="1.2"/><line x1="1869.2" y1="215.5" x2="1869.2" y2="1080" stroke="#e9e9e9" stroke-width="1.2" stroke-dasharray="2.2 2"/><line x1="1869.2" y1="1080" x2="1869.2" y2="1087" stroke="#e9e9e9" stroke-width="1.2"/><line x1="1956.8" y1="215.5" x2="1956.8" y2="1080" stroke="#e9e9e9" stroke-width="1.2" stroke-dasharray="2.2 2"/><line x1="1956.8" y1="1080" x2="1956.8" y2="1087" stroke="#e9e9e9" stroke-width="1.2"/><line x1="757" y1="309.9" x2="1972" y2="309.9" stroke="#e9e9e9" stroke-width="1.2" stroke-dasharray="2.2 2"/><line x1="749.5" y1="309.9" x2="757" y2="309.9" stroke="#ececec" stroke-width="1.2"/><line x1="757" y1="408.8" x2="1972" y2="408.8" stroke="#e9e9e9" stroke-width="1.2" stroke-dasharray="2.2 2"/><line x1="749.5" y1="408.8" x2="757" y2="408.8" stroke="#ececec" stroke-width="1.2"/><line x1="757" y1="507.7" x2="1972" y2="507.7" stroke="#e9e9e9" stroke-width="1.2" stroke-dasharray="2.2 2"/><line x1="749.5" y1="507.7" x2="757" y2="507.7" stroke="#ececec" stroke-width="1.2"/><line x1="757" y1="606.6" x2="1972" y2="606.6" stroke="#e9e9e9" stroke-width="1.2" stroke-dasharray="2.2 2"/><line x1="749.5" y1="606.6" x2="757" y2="606.6" stroke="#ececec" stroke-width="1.2"/><line x1="757" y1="705.5" x2="1972" y2="705.5" stroke="#bdbdbd" stroke-width="1.3" stroke-dasharray="2.4 2"/><line x1="749.5" y1="705.5" x2="757" y2="705.5" stroke="#ececec" stroke-width="1.2"/><line x1="757" y1="804.4" x2="1972" y2="804.4" stroke="#e9e9e9" stroke-width="1.2" stroke-dasharray="2.2 2"/><line x1="749.5" y1="804.4" x2="757" y2="804.4" stroke="#ececec" stroke-width="1.2"/><line x1="757" y1="903.3" x2="1972" y2="903.3" stroke="#e9e9e9" stroke-width="1.2" stroke-dasharray="2.2 2"/><line x1="749.5" y1="903.3" x2="757" y2="903.3" stroke="#ececec" stroke-width="1.2"/><line x1="757" y1="1002.2" x2="1972" y2="1002.2" stroke="#e9e9e9" stroke-width="1.2" stroke-dasharray="2.2 2"/><line x1="749.5" y1="1002.2" x2="757" y2="1002.2" stroke="#ececec" stroke-width="1.2"/><line x1="757" y1="1080.4" x2="1972" y2="1080.4" stroke="#ebebeb" stroke-width="1.3"/><line x1="756.6" y1="215.5" x2="756.6" y2="1080" stroke="#f3f3f3" stroke-width="1.3"/><circle cx="832" cy="716" r="7" fill="#e8e8e8"/><circle cx="839" cy="720" r="7" fill="#e8e8e8"/><circle cx="846" cy="722.5" r="7" fill="#e8e8e8"/><circle cx="853" cy="722.5" r="7" fill="#e8e8e8"/><circle cx="859" cy="721" r="7" fill="#e8e8e8"/><circle cx="840" cy="713" r="7" fill="#e8e8e8"/><circle cx="850" cy="714" r="7" fill="#e8e8e8"/><circle cx="828" cy="712" r="7" fill="#e8e8e8"/><circle cx="817" cy="705" r="7" fill="#d3e8ef"/><circle cx="823" cy="703" r="7" fill="#d3e8ef"/><circle cx="829" cy="701" r="7" fill="#d6e9ef"/><circle cx="835" cy="698.5" r="7" fill="#d3e8ef"/><circle cx="841" cy="696" r="7" fill="#cfe5ee"/><circle cx="847" cy="693" r="7" fill="#c6e0ec"/><circle cx="853" cy="690" r="7" fill="#c2deeb"/><circle cx="859" cy="688.5" r="7" fill="#bedceb"/><circle cx="822" cy="707" r="7" fill="#d3e8ef"/><circle cx="829" cy="706" r="7" fill="#d8eaf0"/><circle cx="837" cy="704.5" r="7" fill="#dcecf0"/><circle cx="845" cy="703" r="7" fill="#e0ecef"/><circle cx="853" cy="701" r="7" fill="#dde9ee"/><circle cx="859" cy="699" r="7" fill="#d0e4ee"/><circle cx="835" cy="709" r="7" fill="#dcebef"/><circle cx="844" cy="708.5" r="7" fill="#e2ecee"/><circle cx="1652.6" cy="262.2" r="9.5" fill="#0aaecb" stroke="#000" stroke-width="2.2"/></svg>
<span class="t" style="top:303px;font-size:17.5px;line-height:17.5px;color:#7c7c7c;left:690.6px;letter-spacing:0.214px;">$8,000</span>
<span class="t" style="top:402px;font-size:17.5px;line-height:17.5px;color:#7c7c7c;left:690.6px;letter-spacing:0.214px;">$6,000</span>
<span class="t" style="top:500px;font-size:17.5px;line-height:17.5px;color:#7c7c7c;left:690.6px;letter-spacing:0.214px;">$4,000</span>
<span class="t" style="top:599px;font-size:17.5px;line-height:17.5px;color:#7c7c7c;left:690.6px;letter-spacing:0.214px;">$2,000</span>
<span class="t" style="top:698px;font-size:17.5px;line-height:17.5px;color:#7c7c7c;left:726.7px;letter-spacing:-0.3px;transform:scaleX(0.9805);transform-origin:0 50%;">$0</span>
<span class="t" style="top:797px;font-size:17.5px;line-height:17.5px;color:#7c7c7c;left:678.3000000000001px;letter-spacing:0.245px;">($2,000)</span>
<span class="t" style="top:896px;font-size:17.5px;line-height:17.5px;color:#7c7c7c;left:678.3000000000001px;letter-spacing:0.245px;">($4,000)</span>
<span class="t" style="top:995px;font-size:17.5px;line-height:17.5px;color:#7c7c7c;left:678.3000000000001px;letter-spacing:0.245px;">($6,000)</span>
<span class="t" style="top:1095px;font-size:17.5px;line-height:17.5px;color:#7c7c7c;left:808.5px;letter-spacing:-0.3px;transform:scaleX(1.0070);transform-origin:0 50%;">$0</span>
<span class="t" style="top:1095px;font-size:17.5px;line-height:17.5px;color:#7c7c7c;left:878.35px;letter-spacing:0.194px;">$2,000</span>
<span class="t" style="top:1095px;font-size:17.5px;line-height:17.5px;color:#7c7c7c;left:965.95px;letter-spacing:0.194px;">$4,000</span>
<span class="t" style="top:1095px;font-size:17.5px;line-height:17.5px;color:#7c7c7c;left:1053.55px;letter-spacing:0.194px;">$6,000</span>
<span class="t" style="top:1095px;font-size:17.5px;line-height:17.5px;color:#7c7c7c;left:1141.15px;letter-spacing:0.194px;">$8,000</span>
<span class="t" style="top:1095px;font-size:17.5px;line-height:17.5px;color:#7c7c7c;left:1223.8px;letter-spacing:0.189px;">$10,000</span>
<span class="t" style="top:1095px;font-size:17.5px;line-height:17.5px;color:#7c7c7c;left:1311.3999999999999px;letter-spacing:0.189px;">$12,000</span>
<span class="t" style="top:1095px;font-size:17.5px;line-height:17.5px;color:#7c7c7c;left:1398.9999999999998px;letter-spacing:0.189px;">$14,000</span>
<span class="t" style="top:1095px;font-size:17.5px;line-height:17.5px;color:#7c7c7c;left:1486.6px;letter-spacing:0.189px;">$16,000</span>
<span class="t" style="top:1095px;font-size:17.5px;line-height:17.5px;color:#7c7c7c;left:1574.2px;letter-spacing:0.189px;">$18,000</span>
<span class="t" style="top:1095px;font-size:17.5px;line-height:17.5px;color:#7c7c7c;left:1661.8px;letter-spacing:0.189px;">$20,000</span>
<span class="t" style="top:1095px;font-size:17.5px;line-height:17.5px;color:#7c7c7c;left:1749.3999999999999px;letter-spacing:0.189px;">$22,000</span>
<span class="t" style="top:1095px;font-size:17.5px;line-height:17.5px;color:#7c7c7c;left:1836.9999999999998px;letter-spacing:0.189px;">$24,000</span>
<span class="t" style="top:1095px;font-size:17.5px;line-height:17.5px;color:#7c7c7c;left:1910.1px;letter-spacing:0.189px;">$26,000</span>
<span class="t" style="top:1128px;font-size:17.5px;line-height:17.5px;color:#333;left:1345.3px;letter-spacing:-0.3px;transform:scaleX(1.0052);transform-origin:0 50%;">Sales</span>
<span class="t" style="left:651.5px;top:646px;font-size:17.5px;line-height:17.5px;color:#333;transform:translate(-50%,-50%) rotate(-90deg);letter-spacing:0.2px">Profit</span>
<div style="left:857.7px;top:323.9px;width:1113px;height:733.8px;background:#fff;box-shadow:0 3px 16px rgba(0,0,0,0.32),0 0 0 1.2px rgba(0,0,0,0.2);"></div>
<div style="left:857.7px;top:323.9px;width:1113px;height:57.5px;background:#f5f5f5;"></div>
<span class="t" style="top:346px;font-size:17.5px;line-height:17.5px;color:#4a4a4a;left:884px;letter-spacing:0.161px;">Explain Data</span>
<svg style="left:1935px;top:345px;" width="16" height="16" viewBox="0 0 16 16"><path d="M1 1L15 15M15 1L1 15" stroke="#555" stroke-width="1.4" fill="none"/></svg>
<span class="t" style="top:412px;font-size:22.5px;line-height:22.5px;color:#000;font-weight:700;left:884px;letter-spacing:0.034px;">Tamara Chand</span>
<svg style="left:1050px;top:409px;" width="20" height="20" viewBox="0 0 20 20"><circle cx="10.4" cy="9.6" r="9.4" fill="none" stroke="#555" stroke-width="1.3"/><rect x="9.7" y="8.2" width="1.4" height="6.2" fill="#555"/><rect x="9.7" y="5" width="1.4" height="1.6" fill="#555"/></svg>
<span class="t" style="top:462px;font-size:17px;line-height:17px;color:#5c5c5c;left:897px;letter-spacing:0.042px;">SUM(Sales)</span>
<span class="t" style="top:462px;font-size:17px;line-height:17px;color:#5c5c5c;left:1017px;letter-spacing:0.3px;transform:scaleX(1.0100);transform-origin:0 50%;">SUM(Profit)</span>
<div style="left:857.7px;top:499.4px;width:1113px;height:1.2px;background:#cfcfcf;"></div>
<div style="left:1003px;top:495.9px;width:120.7px;height:4px;background:#666;"></div>
<span class="t" style="top:530px;font-size:16.5px;line-height:16.5px;color:#000;left:884px;letter-spacing:0.3px;transform:scaleX(1.0047);transform-origin:0 50%;">$8,981 SUM(Profit) is higher than expected. Possible explanations:</span>
<div style="left:857.7px;top:576.8px;width:1113px;height:1.2px;background:#d2d2d2;"></div>
<div style="left:857.7px;top:689px;width:437px;height:368px;background:#f5f5f5;"></div>
<div style="left:857.7px;top:688.9px;width:437px;height:1.2px;background:#d8d8d8;"></div>
<div style="left:857.7px;top:801.2px;width:437px;height:1.2px;background:#d8d8d8;"></div>
<div style="left:1294.2px;top:689px;width:1.2px;height:368px;background:#d8d8d8;"></div>
<span class="t" style="top:598px;font-size:16.5px;line-height:16.5px;color:#000;font-weight:700;left:884px;letter-spacing:0.295px;">A Single Extreme Value</span>
<span class="t" style="top:626px;font-size:16.5px;line-height:16.5px;color:#000;left:884px;letter-spacing:0.3px;transform:scaleX(1.0064);transform-origin:0 50%;">A single record with a value of $8,400 is</span>
<span class="t" style="top:651px;font-size:16.5px;line-height:16.5px;color:#000;left:884px;letter-spacing:0.3px;transform:scaleX(1.0144);transform-origin:0 50%;">increasing SUM(Profit).</span>
<span class="t" style="top:710px;font-size:16.5px;line-height:16.5px;color:#000;font-weight:700;left:884px;letter-spacing:0.131px;">Average Value of Records</span>
<span class="t" style="top:738px;font-size:16.5px;line-height:16.5px;color:#000;left:884px;letter-spacing:0.273px;">This mark has a higher than expected average</span>
<span class="t" style="top:764px;font-size:16.5px;line-height:16.5px;color:#000;left:884px;letter-spacing:0.3px;transform:scaleX(1.0396);transform-origin:0 50%;">Profit.</span>
<span class="t" style="top:606px;font-size:16.5px;line-height:16.5px;color:#000;left:1321px;letter-spacing:0.3px;transform:scaleX(1.0008);transform-origin:0 50%;">This mark contains 12 records. One record with a value of $8,400 is increasing</span>
<span class="t" style="top:632px;font-size:16.5px;line-height:16.5px;color:#000;left:1321px;letter-spacing:0.3px;transform:scaleX(1.0086);transform-origin:0 50%;">SUM(Profit). If this extreme value is excluded, SUM(Profit) changes from $8,981</span>
<span class="t" style="top:656px;font-size:16.5px;line-height:16.5px;color:#000;left:1321px;letter-spacing:0.3px;transform:scaleX(0.9993);transform-origin:0 50%;">to $581.</span>
<span class="t" style="top:698px;font-size:16.5px;line-height:16.5px;color:#000;font-weight:700;left:1321px;letter-spacing:0.227px;">Record Details</span>
<span class="t" style="top:698px;font-size:16.5px;line-height:16.5px;color:#000;left:1808px;letter-spacing:0.032px;">View Full Data</span>
<div style="left:1321px;top:728px;width:623.5px;height:79px;overflow:hidden;background:#fff;border-top:1px solid #d8d8d8;border-bottom:1px solid #d8d8d8;border-left:1px solid #d8d8d8;"><div style="left:0;top:34px;width:700px;height:44px;background:#f5f5f5;border-top:1px solid #d8d8d8"></div><div style="left:75.40000000000009px;top:0;width:1.5px;height:79px;background:#d8d8d8"></div><div style="left:182.4000000000001px;top:0;width:1.5px;height:79px;background:#d8d8d8"></div><div style="left:274.20000000000005px;top:0;width:1.5px;height:79px;background:#d8d8d8"></div><div style="left:398px;top:0;width:1.5px;height:79px;background:#d8d8d8"></div><div style="left:549.5px;top:0;width:1.5px;height:79px;background:#d8d8d8"></div></div>
<span class="t" style="top:737px;font-size:16.5px;line-height:16.5px;color:#000;font-weight:700;left:1331px;letter-spacing:0.3px;transform:scaleX(1.0024);transform-origin:0 50%;">Profit</span>
<span class="t" style="top:772px;font-size:16.5px;line-height:16.5px;color:#000;left:1331px;letter-spacing:0.3px;transform:scaleX(1.0810);transform-origin:0 50%;">$8,400</span>
<span class="t" style="top:737px;font-size:16.5px;line-height:16.5px;color:#000;font-weight:700;left:1407px;letter-spacing:0.3px;transform:scaleX(1.0077);transform-origin:0 50%;">Category</span>
<span class="t" style="top:772px;font-size:16.5px;line-height:16.5px;color:#000;left:1407px;letter-spacing:0.3px;transform:scaleX(1.0117);transform-origin:0 50%;">Technology</span>
<span class="t" style="top:737px;font-size:16.5px;line-height:16.5px;color:#000;font-weight:700;left:1514px;letter-spacing:0.3px;transform:scaleX(1.0194);transform-origin:0 50%;">City</span>
<span class="t" style="top:772px;font-size:16.5px;line-height:16.5px;color:#000;left:1514px;letter-spacing:0.3px;transform:scaleX(1.0200);transform-origin:0 50%;">Lafayette</span>
<span class="t" style="top:737px;font-size:16.5px;line-height:16.5px;color:#000;font-weight:700;left:1605.5px;letter-spacing:0.3px;transform:scaleX(1.0176);transform-origin:0 50%;">Country</span>
<span class="t" style="top:772px;font-size:16.5px;line-height:16.5px;color:#000;left:1605.5px;letter-spacing:0.3px;transform:scaleX(1.0198);transform-origin:0 50%;">United States</span>
<span class="t" style="top:737px;font-size:16.5px;line-height:16.5px;color:#000;font-weight:700;left:1729px;letter-spacing:0.3px;transform:scaleX(1.0196);transform-origin:0 50%;">Customer Name</span>
<span class="t" style="top:772px;font-size:16.5px;line-height:16.5px;color:#000;left:1729px;letter-spacing:0.297px;">Tamara Chand</span>
<span class="t" style="top:737px;font-size:16.5px;line-height:16.5px;color:#000;font-weight:700;left:1881px;letter-spacing:0.065px;">Days to</span>
<span class="t" style="top:772px;font-size:16.5px;line-height:16.5px;color:#000;left:1881px;letter-spacing:-0.188px;">7</span>
<div style="left:1323.5px;top:794.6px;width:108.5px;height:9.5px;background:#7f7f7f;border-radius:5px;"></div>
<div style="left:1957px;top:580.5px;width:9.5px;height:201.5px;background:#7f7f7f;border-radius:5px;"></div>
<span class="t" style="top:827px;font-size:16.5px;line-height:16.5px;color:#000;font-weight:700;left:1321px;letter-spacing:0.3px;transform:scaleX(1.0089);transform-origin:0 50%;">Distribution of Row Values Within SUM(Profit)</span>
<div style="left:1321px;top:857px;width:623.5px;height:200px;background:#fff;border:1px solid #d8d8d8;border-bottom:none;"></div>
<svg style="left:0px;top:0px;" width="2000" height="1250" viewBox="0 0 2000 1250"><line x1="1484.6" y1="864" x2="1484.6" y2="981" stroke="#eee" stroke-width="1"/><line x1="1590" y1="864" x2="1590" y2="981" stroke="#eee" stroke-width="1"/><line x1="1695.6" y1="864" x2="1695.6" y2="981" stroke="#eee" stroke-width="1"/><line x1="1801" y1="864" x2="1801" y2="981" stroke="#eee" stroke-width="1"/><line x1="1380.3" y1="864" x2="1380.3" y2="975" stroke="#a8a8a8" stroke-width="1" stroke-dasharray="2.6 2"/><line x1="1380.3" y1="975" x2="1380.3" y2="981" stroke="#e4e4e4" stroke-width="1"/><line x1="1328" y1="974.8" x2="1873" y2="974.8" stroke="#ededed" stroke-width="1.2"/><rect x="1530.5" y="864" width="249.5" height="109.5" fill="#f6f6f6" fill-opacity="0.9"/><circle cx="1378.6" cy="920" r="26.8" fill="none" stroke="#a6a6a6" stroke-width="2.4"/><circle cx="1380" cy="920" r="26.8" fill="none" stroke="#a6a6a6" stroke-width="2.4"/><circle cx="1381.4" cy="920" r="26.8" fill="none" stroke="#a6a6a6" stroke-width="2.4"/><circle cx="1389.4" cy="920" r="26.8" fill="none" stroke="#a6a6a6" stroke-width="2.4"/><circle cx="1398.3" cy="920" r="26.8" fill="none" stroke="#a6a6a6" stroke-width="2.4"/><line x1="1781" y1="918.5" x2="1806" y2="919" stroke="#cfcfcf" stroke-width="1.2"/><circle cx="1822.8" cy="920" r="26.6" fill="none" stroke="#2f6fa6" stroke-width="2.3"/></svg>
<span class="t" style="top:879px;font-size:15.5px;line-height:15.5px;color:#2a2a2a;left:1541.9px;letter-spacing:0.3px;transform:scaleX(1.0036);transform-origin:0 50%;">$8,400</span>
<span class="t" style="top:899px;font-size:15px;line-height:15px;color:#686868;left:1541.9px;letter-spacing:0.3px;transform:scaleX(1.0070);transform-origin:0 50%;">This record changes the</span>
<span class="t" style="top:920px;font-size:15px;line-height:15px;color:#686868;left:1541.9px;letter-spacing:0.3px;transform:scaleX(1.0422);transform-origin:0 50%;">aggregated value from $581 to</span>
<span class="t" style="top:941px;font-size:15px;line-height:15px;color:#686868;left:1541.9px;letter-spacing:0.3px;transform:scaleX(1.0355);transform-origin:0 50%;">$8,981.</span>
<span class="t" style="top:989px;font-size:17.5px;line-height:17.5px;color:#7c7c7c;left:1370.8000000000002px;letter-spacing:-0.269px;">$0</span>
<span class="t" style="top:989px;font-size:17.5px;line-height:17.5px;color:#7c7c7c;left:1457.6499999999999px;letter-spacing:0.074px;">$2,000</span>
<span class="t" style="top:989px;font-size:17.5px;line-height:17.5px;color:#7c7c7c;left:1563.25px;letter-spacing:0.074px;">$4,000</span>
<span class="t" style="top:989px;font-size:17.5px;line-height:17.5px;color:#7c7c7c;left:1668.6499999999999px;letter-spacing:0.074px;">$6,000</span>
<span class="t" style="top:989px;font-size:17.5px;line-height:17.5px;color:#7c7c7c;left:1774.05px;letter-spacing:0.074px;">$8,000</span>
<span class="t" style="top:1022px;font-size:17.5px;line-height:17.5px;color:#333;left:1577.5px;letter-spacing:0.3px;transform:scaleX(1.0549);transform-origin:0 50%;">Profit</span>
<div style="left:0px;top:1179.3px;width:2000px;height:42.2px;background:#e6e6e6;border-top:1.2px solid #dadada;border-bottom:1.3px solid #d2d2d2;"></div>
<div style="left:181.5px;top:1180.5px;width:131px;height:40.5px;background:#fafafa;border-left:1.2px solid #d0d0d0;border-right:1.2px solid #d0d0d0;"></div>
<span class="t" style="top:1193px;font-size:17px;line-height:17px;color:#555;left:34.5px;letter-spacing:-0.300px;">Data Source</span>
<span class="t" style="top:1192px;font-size:17px;line-height:17px;color:#444;font-weight:700;left:190.8px;letter-spacing:-0.3px;transform:scaleX(0.9852);transform-origin:0 50%;">Sales vs Profit</span>
<span class="t" style="top:1193px;font-size:17px;line-height:17px;color:#555;left:321.3px;letter-spacing:-0.043px;">Short Term Forcast</span>
<span class="t" style="top:1193px;font-size:17px;line-height:17px;color:#555;left:490.7px;letter-spacing:-0.3px;transform:scaleX(0.9962);transform-origin:0 50%;">Forecast</span>
<span class="t" style="top:1193px;font-size:17px;line-height:17px;color:#555;left:576.8px;letter-spacing:0.017px;">Performance</span>
<span class="t" style="top:1193px;font-size:17px;line-height:17px;color:#555;left:722.6px;letter-spacing:-0.266px;">Overview</span>
<span class="t" style="top:1193px;font-size:17px;line-height:17px;color:#555;left:837.7px;letter-spacing:0.151px;">Product</span>
<span class="t" style="top:1193px;font-size:17px;line-height:17px;color:#555;left:943.4px;letter-spacing:0.164px;">Customers</span>
<span class="t" style="top:1193px;font-size:17px;line-height:17px;color:#555;left:1074px;letter-spacing:0.030px;">Commission Model</span>
<span class="t" style="top:1193px;font-size:17px;line-height:17px;color:#555;left:1268px;letter-spacing:-0.095px;">Order Details</span>
<span class="t" style="top:1193px;font-size:17px;line-height:17px;color:#555;left:1390.8px;letter-spacing:-0.180px;">What If Forecast</span>
<div style="left:481.0px;top:1181px;width:1.3px;height:39px;background:#cfcfcf;"></div>
<div style="left:567.4px;top:1181px;width:1.3px;height:39px;background:#cfcfcf;"></div>
<div style="left:688.4px;top:1181px;width:1.3px;height:39px;background:#cfcfcf;"></div>
<div style="left:803.6px;top:1181px;width:1.3px;height:39px;background:#cfcfcf;"></div>
<div style="left:909.1999999999999px;top:1181px;width:1.3px;height:39px;background:#cfcfcf;"></div>
<div style="left:1039.8000000000002px;top:1181px;width:1.3px;height:39px;background:#cfcfcf;"></div>
<div style="left:1234.0px;top:1181px;width:1.3px;height:39px;background:#cfcfcf;"></div>
<div style="left:1381.1000000000001px;top:1181px;width:1.3px;height:39px;background:#cfcfcf;"></div>
<div style="left:1529.1000000000001px;top:1181px;width:1.3px;height:39px;background:#cfcfcf;"></div>
<div style="left:1572.9px;top:1181px;width:1.3px;height:39px;background:#cfcfcf;"></div>
<div style="left:1617.2px;top:1181px;width:1.3px;height:39px;background:#cfcfcf;"></div>
<div style="left:1661.7px;top:1181px;width:1.3px;height:39px;background:#cfcfcf;"></div>
<div style="left:0px;top:1221.6px;width:2000px;height:28.4px;background:#ebebeb;"></div>
<span class="t" style="top:1229px;font-size:14.5px;line-height:14.5px;color:#222;left:17.8px;letter-spacing:0.021px;">1 of 792 marks</span>
<span class="t" style="top:1229px;font-size:14.5px;line-height:14.5px;color:#222;left:137.4px;letter-spacing:-0.167px;">1 row by 1 column</span>
<span class="t" style="top:1229px;font-size:14.5px;line-height:14.5px;color:#222;left:274.5px;letter-spacing:0.076px;">SUM(Sales): $19,052</span>
<span class="t" style="top:1229px;font-size:14.5px;line-height:14.5px;color:#222;left:1395px;letter-spacing:-0.3px;transform:scaleX(0.9786);transform-origin:0 50%;">Ryan McShane</span>
<span class="t" style="top:1229px;font-size:14.5px;line-height:14.5px;color:#222;left:1707.5px;letter-spacing:-0.3px;transform:scaleX(0.9905);transform-origin:0 50%;">FF: +3 -0</span>
<div style="left:1356.8px;top:1222px;width:1.5px;height:28px;background:#d6d6d6;"></div>
<div style="left:1533.0px;top:1222px;width:1.5px;height:28px;background:#d6d6d6;"></div>
<div style="left:1570.6px;top:1222px;width:1.5px;height:28px;background:#d6d6d6;"></div>
<div style="left:1608.1px;top:1222px;width:1.5px;height:28px;background:#d6d6d6;"></div>
<div style="left:1673.6px;top:1222px;width:1.5px;height:28px;background:#d6d6d6;"></div>
<div style="left:1794.1px;top:1222px;width:1.5px;height:28px;background:#d6d6d6;"></div>
<div style="left:1892.8999999999999px;top:1222px;width:1.5px;height:28px;background:#d6d6d6;"></div>
<svg style="left:0px;top:0px;" width="2000" height="1250" viewBox="0 0 2000 1250"><path d="M1923.5 700.6H1926M1928.3 700.6H1932.8M1935.2 700.6H1940" stroke="#666" stroke-width="1.3"/><path d="M1923.5 703.4H1926M1928.3 703.4H1932.8M1935.2 703.4H1940" stroke="#666" stroke-width="1.3"/><path d="M1923.5 706.2H1926M1928.3 706.2H1932.8M1935.2 706.2H1940" stroke="#666" stroke-width="1.3"/><path d="M1923.5 709H1926M1928.3 709H1932.8M1935.2 709H1940" stroke="#666" stroke-width="1.3"/><path d="M1923.5 711.8H1926M1928.3 711.8H1932.8M1935.2 711.8H1940" stroke="#666" stroke-width="1.3"/><path d="M1922.6 874.8H1915.3Q1913.8 874.8 1913.8 876.3V886.1Q1913.8 887.6 1915.3 887.6H1924.9Q1926.4 887.6 1926.4 886.1V879" stroke="#6f6f6f" stroke-width="1.6" fill="none"/><path d="M1917.3 880.8V884.6M1920.1 876.8V884.6M1923 881V884.6" stroke="#6f6f6f" stroke-width="1.5" fill="none"/><path d="M1923.2 878L1928.6 872.6" stroke="#6f6f6f" stroke-width="1.6" fill="none"/><path d="M1925.3 871.1L1930.6 870.9L1930.4 876.2Z" fill="#6f6f6f"/><ellipse cx="19.4" cy="1195.2" rx="4.8" ry="2.4" stroke="#666" stroke-width="1.3" fill="none"/><path d="M14.6 1195.2V1204.6A4.8 2.4 0 0 0 24.2 1204.6V1195.2" stroke="#666" stroke-width="1.3" fill="none"/><rect x="701.7" y="1193.2" width="13.4" height="13.4" rx="1.5" stroke="#666" stroke-width="1.5" fill="none"/><path d="M708.4000000000001 1193.2V1206.6M701.7 1199.9H715.1" stroke="#666" stroke-width="1.3" fill="none"/><rect x="816.9" y="1193.2" width="13.4" height="13.4" rx="1.5" stroke="#666" stroke-width="1.5" fill="none"/><path d="M823.6 1193.2V1206.6M816.9 1199.9H830.3" stroke="#666" stroke-width="1.3" fill="none"/><rect x="922.4" y="1193.2" width="13.4" height="13.4" rx="1.5" stroke="#666" stroke-width="1.5" fill="none"/><path d="M929.1 1193.2V1206.6M922.4 1199.9H935.8" stroke="#666" stroke-width="1.3" fill="none"/><rect x="1052.8" y="1193.2" width="13.4" height="13.4" rx="1.5" stroke="#666" stroke-width="1.5" fill="none"/><path d="M1059.5 1193.2V1206.6M1052.8 1199.9H1066.2" stroke="#666" stroke-width="1.3" fill="none"/><rect x="1247.2" y="1193.2" width="13.4" height="13.4" rx="1.5" stroke="#666" stroke-width="1.5" fill="none"/><path d="M1253.9 1193.2V1206.6M1247.2 1199.9H1260.6000000000001" stroke="#666" stroke-width="1.3" fill="none"/><path d="M1557.3 1201V1194.2Q1557.3 1192.7 1555.8 1192.7H1545.4Q1543.9 1192.7 1543.9 1194.2V1204.6Q1543.9 1206.1 1545.4 1206.1H1552" stroke="#666" stroke-width="1.5" fill="none"/><path d="M1547 1200V1202.6M1550.5 1196V1202.6M1554 1198V1202.6" stroke="#666" stroke-width="1.4" fill="none"/><path d="M1553.7 1207H1563.3M1558.5 1202.2V1211.8" stroke="#555" stroke-width="2.3" fill="none"/><path d="M1601.8 1201V1194.2Q1601.8 1192.7 1600.3 1192.7H1589.9Q1588.4 1192.7 1588.4 1194.2V1204.6Q1588.4 1206.1 1589.9 1206.1H1596.5" stroke="#666" stroke-width="1.5" fill="none"/><path d="M1595.1 1192.7V1206.1M1588.4 1199.4H1601.8" stroke="#666" stroke-width="1.3" fill="none"/><path d="M1598.0 1207H1607.6M1602.8 1202.2V1211.8" stroke="#555" stroke-width="2.3" fill="none"/><path d="M1646.2 1200V1192.6L1639.5 1194.6L1632.9 1192.6V1204.2L1639.5 1206.4V1194.6" stroke="#666" stroke-width="1.5" fill="none" stroke-linejoin="round"/><path d="M1642.4 1207H1652.0M1647.2 1202.2V1211.8" stroke="#555" stroke-width="2.3" fill="none"/><circle cx="1373.7" cy="1230" r="2.7" stroke="#666" stroke-width="1.3" fill="none"/><path d="M1367.7 1242.8V1240.8Q1367.7 1237.2 1371.3 1237.2H1376.1Q1379.7 1237.2 1379.7 1240.8V1242.8Z" stroke="#666" stroke-width="1.3" fill="none" stroke-linejoin="round"/><path d="M1513.5 1233.5H1523L1518.2 1238.6Z" fill="#111"/><rect x="1806.6" y="1230.7" width="1.4" height="9.5" fill="#b9b9b9"/><path d="M1815.2 1230.7V1240.2L1810 1235.5Z" fill="#b9b9b9"/><path d="M1836.2 1230.7V1240.2L1830.7 1235.5Z" fill="#b9b9b9"/><path d="M1852.8 1230.7V1240.2L1858.2 1235.5Z" fill="#b9b9b9"/><path d="M1873.5 1230.7V1240.2L1879 1235.5Z" fill="#b9b9b9"/><rect x="1880.6" y="1230.7" width="1.4" height="9.5" fill="#b9b9b9"/><rect x="1906.3" y="1228.6" width="3.7" height="3.7" fill="#b9b9b9"/><rect x="1911.95" y="1228.6" width="3.7" height="3.7" fill="#b9b9b9"/><rect x="1917.6" y="1228.6" width="3.7" height="3.7" fill="#b9b9b9"/><rect x="1906.3" y="1234.25" width="3.7" height="3.7" fill="#b9b9b9"/><rect x="1911.95" y="1234.25" width="3.7" height="3.7" fill="#b9b9b9"/><rect x="1917.6" y="1234.25" width="3.7" height="3.7" fill="#b9b9b9"/><rect x="1906.3" y="1239.8999999999999" width="3.7" height="3.7" fill="#b9b9b9"/><rect x="1911.95" y="1239.8999999999999" width="3.7" height="3.7" fill="#b9b9b9"/><rect x="1917.6" y="1239.8999999999999" width="3.7" height="3.7" fill="#b9b9b9"/><rect x="1935.4" y="1228.6" width="15.2" height="9" fill="#b9b9b9"/><rect x="1935.4" y="1240" width="3.7" height="3.6" fill="#b9b9b9"/><rect x="1941.15" y="1240" width="3.7" height="3.6" fill="#b9b9b9"/><rect x="1946.9" y="1240" width="3.7" height="3.6" fill="#b9b9b9"/><rect x="1964.8" y="1228.6" width="15" height="15" fill="#6a6a6a"/></svg>
</div></body></html>
